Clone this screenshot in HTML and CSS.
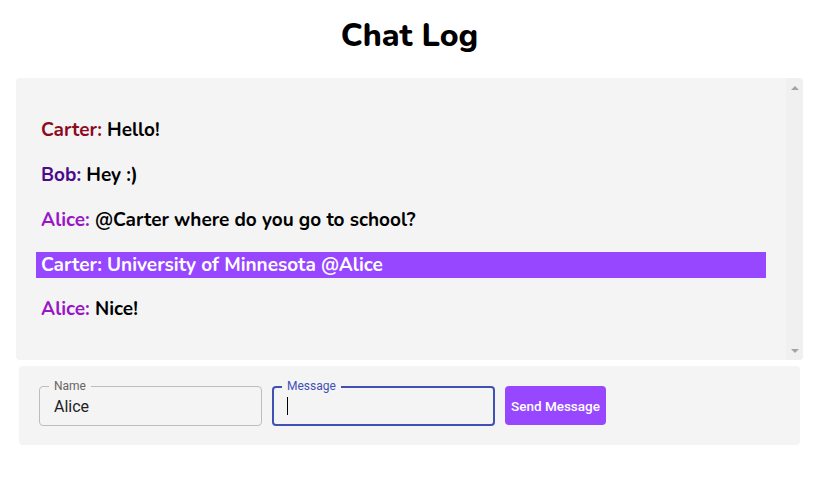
FILE: index.html
```html
<!DOCTYPE html>
<html>
<head>
<meta charset="utf-8">
<link rel="stylesheet" href="styles.css">
</head>
<body>
<h1 class="title">Chat Log</h1>
<div class="log">
  <div class="messages">
    <p class="msg"><span class="name carter">Carter:</span> Hello!</p>
    <p class="msg"><span class="name bob">Bob:</span> Hey :)</p>
    <p class="msg"><span class="name alice">Alice:</span> @Carter where do you go to school?</p>
    <p class="msg mention"><span class="name">Carter:</span> University of Minnesota @Alice</p>
    <p class="msg"><span class="name alice">Alice:</span> Nice!</p>
  </div>
  <div class="scrollbar">
    <span class="arrow up"></span>
    <span class="arrow down"></span>
  </div>
</div>
<form class="composer">
  <label class="field">
    <span class="legend">Name</span>
    <span class="value">Alice</span>
  </label>
  <label class="field focused">
    <span class="legend">Message</span>
    <span class="value"><span class="caret"></span></span>
  </label>
  <button type="button" class="send">Send Message</button>
</form>
</body>
</html>
```
FILE: styles.css
```css
* { box-sizing: border-box; }
body {
  margin: 0;
  padding: 0 21px 0 16px;
  font-family: "Nunito", "Lato", "Noto Sans", sans-serif;
  background: #fff;
  color: #000;
}
.title {
  margin: 0;
  padding-top: 16px;
  height: 78px;
  text-align: center;
  font-size: 32px;
  font-weight: 800;
  line-height: 40px;
}
.log {
  display: flex;
  height: 282px;
  background: #f4f4f4;
  border-radius: 4px;
  overflow: hidden;
}
.messages {
  flex: 1;
  padding: 21px 20px 19px;
}
.msg {
  margin: 18px 0;
  padding: 0 5px;
  font-size: 19px;
  font-weight: 700;
  line-height: 27px;
}
.carter { color: #8b0a1e; }
.bob { color: #4b0a8a; }
.alice { color: #9a14c8; }
.mention {
  background: #9747ff;
  color: #fff;
  line-height: 26px;
}
.scrollbar {
  width: 17px;
  background: #f0f0f0;
  display: flex;
  flex-direction: column;
  justify-content: space-between;
  align-items: center;
  padding: 8px 0 7px;
}
.arrow {
  width: 0;
  height: 0;
  border-left: 4px solid transparent;
  border-right: 4px solid transparent;
}
.arrow.up { border-bottom: 4px solid #a3a3a3; }
.arrow.down { border-top: 4px solid #a3a3a3; }
.composer {
  margin: 6px 3px 0;
  background: #f4f4f4;
  border-radius: 4px;
  padding: 20px 20px 19px;
  display: flex;
  gap: 10px;
  font-family: "Roboto", sans-serif;
}
.field {
  position: relative;
  width: 223px;
  height: 40px;
  border: 1px solid #bdbdbd;
  border-radius: 4px;
  display: flex;
  align-items: center;
  padding: 0 14px;
}
.field.focused {
  border: 2px solid #3f51b5;
  padding: 0 13px;
}
.legend {
  position: absolute;
  top: -8px;
  left: 9px;
  padding: 0 5px;
  background: #f4f4f4;
  font-size: 12px;
  line-height: 14px;
  color: #666;
}
.focused .legend {
  left: 8px;
  top: -9px;
  color: #3f51b5;
}
.value {
  font-size: 16px;
  color: #222;
  display: flex;
  align-items: center;
}
.caret {
  display: inline-block;
  width: 1px;
  height: 18px;
  background: #000;
}
.send {
  height: 39px;
  width: 101px;
  border: 0;
  border-radius: 4px;
  background: #9747ff;
  color: #fff;
  font-family: "Roboto", sans-serif;
  font-size: 13.5px;
  font-weight: 500;
  padding: 0;
}
```
